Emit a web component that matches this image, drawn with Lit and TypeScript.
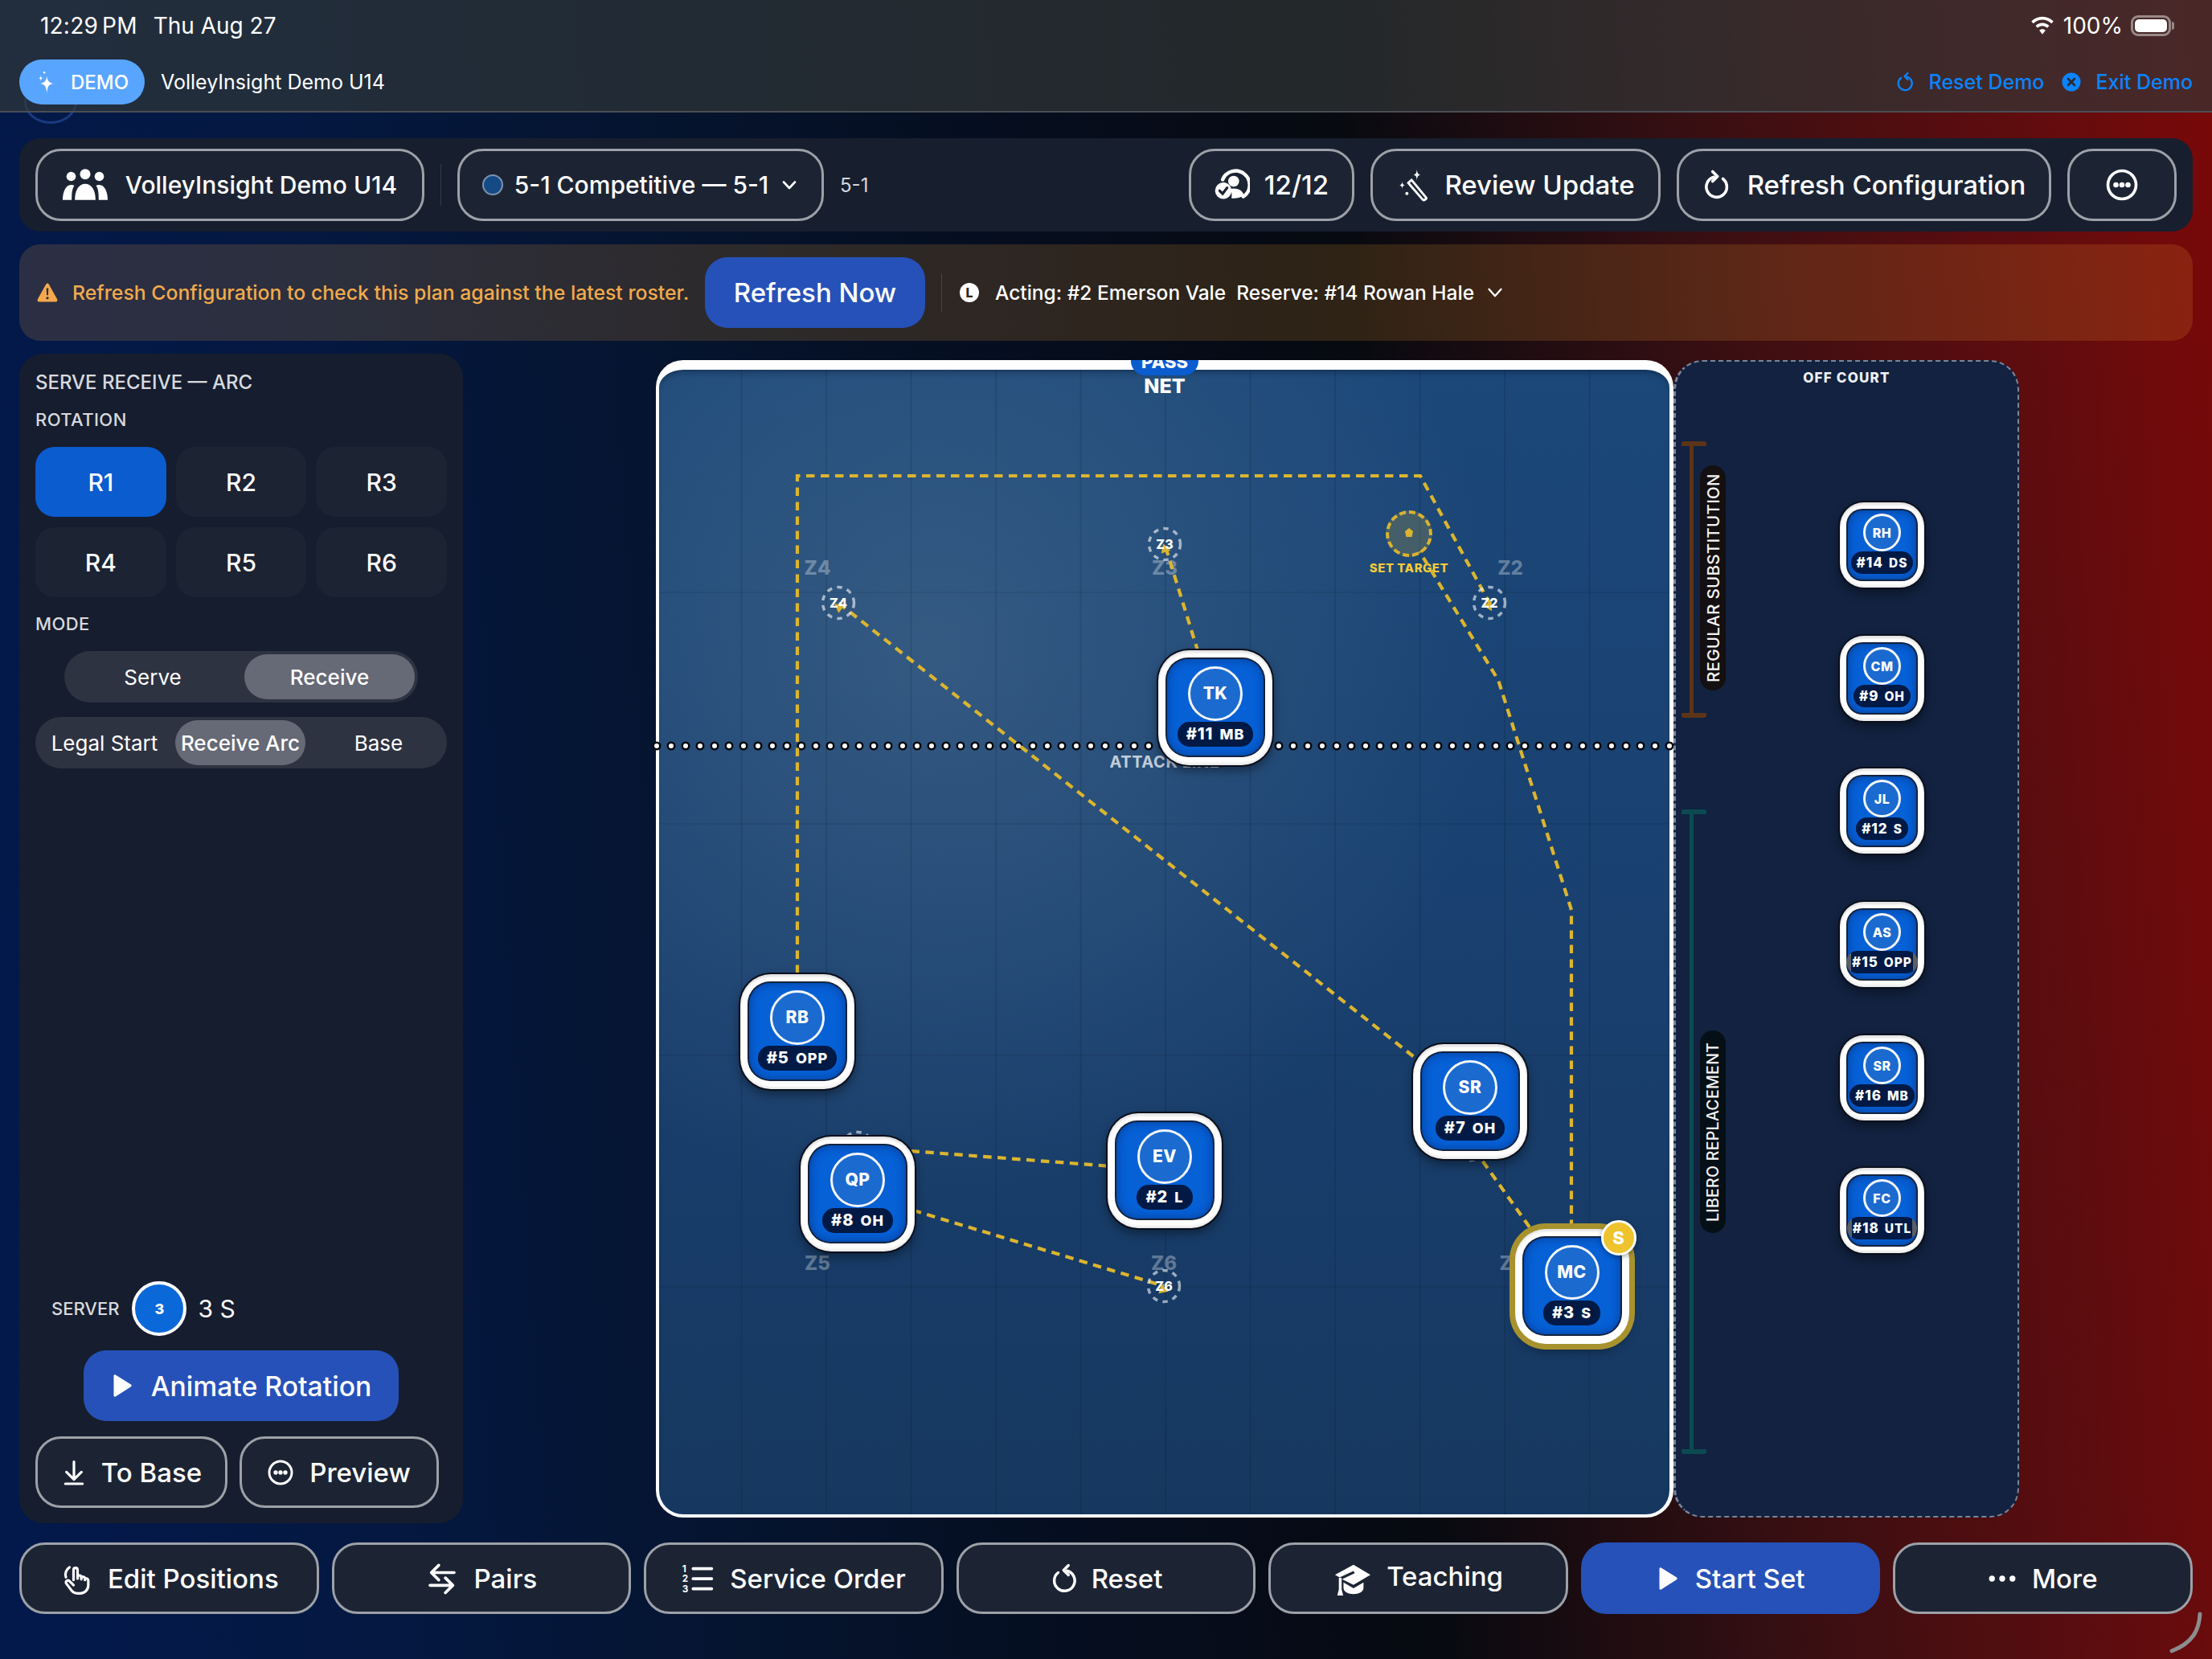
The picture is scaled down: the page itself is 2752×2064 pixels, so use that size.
import { LitElement, html, css, svg } from "lit";
import { customElement } from "lit/decorators.js";

const stroke = (w: number, inner: unknown, cls = "ic") => html`<svg class=${cls} viewBox="0 0 24 24" fill="none" stroke="currentColor" stroke-width=${w} stroke-linecap="round" stroke-linejoin="round">${inner}</svg>`;
const fill = (inner: unknown, cls = "ic") => html`<svg class=${cls} viewBox="0 0 24 24" fill="currentColor">${inner}</svg>`;

const I = {
  sparkle: fill(svg`<path d="M13 6c.6 5 2 6.600 6.500 7.500C15 14.400 13.600 16 13 23c-.6-7-2-8.600-6.500-9.500C11 12.600 12.400 11 13 6z"/><path d="M7 5.500c.2 1.800.7 2.300 2 2.700-1.300.4-1.800.9-2 2.800-.2-1.900-.7-2.400-2-2.800 1.300-.4 1.800-.9 2-2.700z"/><circle cx="10.500" cy="2.500" r="1"/>`),
  team: html`<svg class="ic" viewBox="0 4 24 17" fill="currentColor"><circle cx="12" cy="6.800" r="2.800"/><circle cx="4.500" cy="8" r="2.500"/><circle cx="19.500" cy="8" r="2.500"/><path d="M6.500 20.500c0-5 2-8.500 5.500-8.500s5.500 3.500 5.500 8.500z"/><path d="M0 20.500c0-4 1.500-8 4.500-8 .7 0 1.200.1 1.700.4C5 14.500 4.800 17 4.800 20.500z"/><path d="M24 20.500c0-4-1.500-8-4.500-8-.7 0-1.200.1-1.700.4 1.200 1.600 1.400 4.100 1.400 7.600z"/></svg>`,
  chev: stroke(2.600, svg`<path d="M5 8.500l7 7.500 7-7.500"/>`),
  personCheck: html`<svg class="ic" viewBox="0 0 24 24" fill="none" stroke="currentColor" stroke-width="2.400" stroke-linecap="round"><path d="M5.500 8.500a9.500 9.500 0 1 1 14 11.500"/><circle cx="13" cy="9.500" r="3.700" fill="currentColor" stroke="none"/><path d="M20 19c-1-3-3.500-4.500-7-4.500-1 0-1.800.1-2.500.4 1.200 1.500 1.500 3.500 1 6.100 1.300.4 5.500.4 8.500-2z" fill="currentColor" stroke="none"/><circle cx="6" cy="16" r="5.600" fill="currentColor" stroke="none"/><path d="M3.500 16l2 2 3-4" stroke="#1c2434" stroke-width="1.800"/></svg>`,
  wand: html`<svg class="ic" viewBox="0 0 24 24" fill="none" stroke="currentColor" stroke-width="1.700" stroke-linecap="round" stroke-linejoin="round"><path d="M9 10.500l2.500-2.200 11 13.400c.4.6-1.800 2.200-2.400 1.600z"/><path fill="currentColor" stroke="none" d="M15.500 .5c.3 3 .8 3.500 2.500 4-1.700.5-2.200 1-2.500 4-.3-3-.8-3.500-2.500-4 1.700-.5 2.200-1 2.500-4zM4.500 9.500c.2 2 .6 2.400 2 2.800-1.400.4-1.800.8-2 2.700-.2-1.900-.6-2.300-2-2.700 1.400-.4 1.800-.8 2-2.800z"/><circle cx="8" cy="18.500" r="1.200" fill="currentColor" stroke="none"/></svg>`,
  refresh: stroke(2.400, svg`<path d="M9.500 5.500A8.500 8.500 0 1 0 17 7"/><path d="M9 1.500l4 4-4 4" transform="translate(-.5 -.5)"/>`),
  dots: stroke(2.200, svg`<circle cx="12" cy="12" r="10.500"/><circle cx="7.500" cy="12" r=".9" fill="currentColor"/><circle cx="12" cy="12" r=".9" fill="currentColor"/><circle cx="16.500" cy="12" r=".9" fill="currentColor"/>`),
  warn: html`<svg class="ic" viewBox="0 0 24 24"><path fill="#f5a94c" d="M10.300 2.500c.8-1.400 2.600-1.400 3.400 0l9.500 17c.8 1.400-.1 3-1.700 3H2.500c-1.600 0-2.500-1.600-1.700-3z"/><path fill="#2e3040" d="M10.800 7h2.400l-.3 8h-1.800z"/><circle cx="12" cy="18.300" r="1.500" fill="#2e3040"/></svg>`,
  wifi: fill(svg`<path d="M12 3C7.800 3 4 4.700 1 7.600l2 2.200C5.500 7.400 8.600 6 12 6s6.500 1.400 9 3.800l2-2.200C20 4.700 16.200 3 12 3z"/><path d="M12 9.200c-2.600 0-5 1-6.800 2.800l2 2.200c1.300-1.200 3-2 4.800-2s3.500.8 4.800 2l2-2.200c-1.800-1.800-4.200-2.800-6.800-2.800z"/><path d="M12 15.300c-1.200 0-2.300.5-3.100 1.300L12 20.500l3.100-3.900c-.8-.8-1.900-1.300-3.100-1.300z"/>`),
  undo: stroke(2.300, svg`<path d="M14.500 5.500A8.500 8.500 0 1 1 7 7"/><path d="M15 1.500l-4 4 4 4" transform="translate(.5 -.5)"/>`),
  xc: html`<svg class="ic" viewBox="0 0 24 24"><circle cx="12" cy="12" r="11.500" fill="#0a84ff"/><path d="M8 8l8 8M16 8l-8 8" stroke="#2a2a2e" stroke-width="2.600" stroke-linecap="round"/></svg>`,
  down: stroke(2.400, svg`<path d="M12 2v16M5 11.500l7 7 7-7M4 22.500h16"/>`),
  hand: stroke(1.900, svg`<path d="M10.500 13V5.500a1.500 1.500 0 0 1 3 0V12"/><path d="M13.500 11a1.400 1.400 0 0 1 2.800 0v1.500"/><path d="M16.300 11.500a1.400 1.400 0 0 1 2.700.5v1"/><path d="M19 12.500a1.400 1.400 0 0 1 2.500.9V17a6 6 0 0 1-6 6h-2a6 6 0 0 1-5-2.800L5 15.500a1.500 1.500 0 0 1 2.500-1.600l3 3"/><path d="M7.500 3.500A6.500 6.500 0 0 0 4.800 11"/>`),
  swap: stroke(2.200, svg`<path d="M21 7.500H4M9.500 2L4 7.500 9.500 13"/><path d="M3 17h17M14.500 11.500L20 17l-5.500 5.500"/>`),
  list: html`<svg class="ic" viewBox="0 0 24 24" fill="currentColor"><rect x="7.500" y="3.500" width="16" height="2.200" rx="1"/><rect x="7.500" y="11" width="16" height="2.200" rx="1"/><rect x="7.500" y="18.500" width="16" height="2.200" rx="1"/><text x="0.500" y="7" font-size="7" font-family="Inter" font-weight="700">1</text><text x="0.500" y="14.500" font-size="7" font-family="Inter" font-weight="700">2</text><text x="0.500" y="22" font-size="7" font-family="Inter" font-weight="700">3</text></svg>`,
  play: fill(svg`<path d="M3 1.500c0-1 1-1.500 1.900-1l16.500 10.300c.8.500.8 1.800 0 2.300L4.900 23.500c-.9.500-1.900 0-1.900-1z"/>`),
};

interface T { i: string; n: string; r: string; x: number; y: number; setter?: boolean }
const court: T[] = [
  { i: "TK", n: "#11", r: "MB", x: 1512, y: 880 },
  { i: "RB", n: "#5", r: "OPP", x: 992, y: 1283 },
  { i: "QP", n: "#8", r: "OH", x: 1067, y: 1485 },
  { i: "EV", n: "#2", r: "L", x: 1449, y: 1456 },
  { i: "SR", n: "#7", r: "OH", x: 1829, y: 1370 },
  { i: "MC", n: "#3", r: "S", x: 1955.500, y: 1600, setter: true },
];
const bench = [
  ["RH", "#14", "DS", 678, false],
  ["CM", "#9", "OH", 844, false],
  ["JL", "#12", "S", 1009, false],
  ["AS", "#15", "OPP", 1175, true],
  ["SR", "#16", "MB", 1341, false],
  ["FC", "#18", "UTL", 1506, true],
] as const;
const zones = [
  ["Z4", 1043, 750, 1017, 707],
  ["Z3", 1449, 677, 1449, 707],
  ["Z2", 1853, 750, 1879, 707],
  ["Z5", 1067, 1428, 1017, 1572],
  ["Z6", 1448, 1600, 1448, 1572],
  ["Z1", 1830, 1424, 1879, 1572],
] as const;
const paths = [
  "M992 1283V592H1767L1853 750",
  "M1512 880L1449 677",
  "M1829 1370L1043 750",
  "M1449 1456L1067 1427",
  "M1067 1485L1448 1600",
  "M1955 1600L1830 1424",
  "M1955 1600V1132L1864 846L1766 686",
];
const tips = [
  [1853, 750, 61],
  [1449, 677, -107],
  [1043, 750, 218],
  [1448, 1600, 17],
];

@customElement("app-root")
export class AppRoot extends LitElement {
  static styles = css`
    :host { display: block; font-family: Inter, "Liberation Sans", sans-serif; color: #fff; }
    * { box-sizing: border-box; }
    .page { position: relative; width: 2752px; height: 2064px; overflow: hidden; display: flex; flex-direction: column;
      background: linear-gradient(86deg, #03194c 0%, #041840 18%, #05142f 32%, #060a14 58%, #070a10 62%, #3a0f12 78%, #640c0e 93%, #7a0808 100%); }
    .ic { display: block; width: 36px; height: 36px; flex: none; }
    .arc { position: absolute; left: 30px; top: 100px; width: 66px; height: 54px; border: 3px solid #1a3b80; border-radius: 50%; }

    header { position: relative; height: 140px; flex: none; background: rgba(50,56,56,.66); border-bottom: 2px solid #4a4e54; padding: 0 24px; display: flex; flex-direction: column; }
    .status { height: 64px; display: flex; align-items: center; font-size: 28px; padding-left: 26px; padding-right: 30px; }
    .status .time { letter-spacing: .2px; word-spacing: -3px; margin-right: 20px; }
    .status .rt { margin-left: auto; display: flex; align-items: center; gap: 10px; }
    .status .ic { width: 32px; height: 30px; }
    .batt { position: relative; width: 50px; height: 26px; border: 3px solid rgba(255,255,255,.45); border-radius: 9px; padding: 2px; margin-right: -3px; }
    .batt i { display: block; height: 100%; background: #fff; border-radius: 5px; }
    .batt::after { content: ""; position: absolute; right: -7px; top: 5px; width: 3px; height: 10px; border-radius: 0 3px 3px 0; background: rgba(255,255,255,.45); }
    .demo { display: flex; align-items: center; height: 56px; margin-top: 10px; font-size: 25px; }
    .pill { width: 156px; height: 56px; border-radius: 28px; background: #58a5ff; display: flex; align-items: center; gap: 16px; padding-left: 18px; font-weight: 500; margin-right: 20px; font-size: 24px; }
    .pill .ic { width: 30px; height: 32px; }
    .lnk { margin-left: auto; display: flex; align-items: center; color: #0a84ff; font-weight: 500; font-size: 25px; }
    .lnk .ic { width: 24px; height: 26px; }
    .lnk .t1 { margin: 0 22px 0 18px; }
    .lnk .t2 { margin-left: 18px; }

    .toolbar { flex: none; height: 116px; margin: 32px 24px 0; background: #171e2e; border-radius: 26px; display: flex; align-items: center; padding: 0 20px; }
    .btn { height: 90px; border: 3px solid #9da1a8; border-radius: 32px; background: #1c2434; display: flex; align-items: center; justify-content: center; font-size: 33px; font-weight: 500; color: #fff; gap: 20px; flex: none; white-space: nowrap; }
    .vdiv { width: 1px; height: 52px; background: #343a48; margin: 0 20px; flex: none; }
    .team { width: 484px; font-size: 30px; gap: 22px; } .team .ic { width: 56px; height: 40px; }
    .cfg { width: 456px; gap: 12px; font-size: 30px; }
    .cfg .dot { width: 26px; height: 26px; border-radius: 50%; background: #164a86; border: 2px solid #7d93b0; margin-right: 2px; }
    .cfg .ic { width: 24px; height: 24px; margin-left: 2px; }
    .tag { font-size: 24px; color: #d4d6da; margin-left: 20px; }
    .rgt { margin-left: auto; display: flex; gap: 20px; }
    .b-count { width: 206px; gap: 18px; } .b-count .ic { width: 44px; height: 44px; }
    .b-review { width: 361px; } .b-review .ic { width: 40px; height: 42px; }
    .b-refresh { width: 466px; } .b-refresh .ic { width: 36px; height: 38px; }
    .b-more { width: 136px; } .b-more .ic { width: 40px; height: 40px; }

    .banner { flex: none; height: 120px; margin: 16px 24px 0; border-radius: 26px; background: rgba(255,170,50,.16); display: flex; align-items: center; padding-left: 21px; font-size: 24.500px; }
    .banner > .ic { width: 28px; height: 26px; }
    .warn { color: #f2aa4c; font-weight: 500; margin-left: 17px; width: 768px; white-space: nowrap; font-size: 24.800px; }
    .now { width: 274px; height: 88px; border-radius: 28px; background: #2651b8; display: flex; align-items: center; justify-content: center; font-size: 33px; font-weight: 500; margin-left: 19px; flex: none; }
    .bdiv { width: 1px; height: 48px; background: rgba(255,255,255,.14); margin: 0 20px; }
    .lc { width: 24px; height: 24px; border-radius: 50%; background: #fff; color: #2f2418; font-size: 16px; font-weight: 800; display: flex; align-items: center; justify-content: center; margin-right: 20px; margin-left: 2px; }
    .act { font-weight: 500; white-space: nowrap; font-size: 24.500px; }
    .act + .act { margin-left: 13px; }
    .banner .cv { width: 20px; height: 20px; margin-left: 16px; }

    .main { flex: none; height: 1455px; margin: 16px 24px 0; display: flex; align-items: flex-start; }
    aside { width: 552px; height: 1455px; background: #161d2e; border-radius: 30px; padding: 0 20px; display: flex; flex-direction: column; flex: none; }
    .h1 { font-size: 24px; font-weight: 500; color: #d8dade; margin-top: 21px; height: 30px; line-height: 30px; }
    .h2 { font-size: 22px; font-weight: 500; color: #d8dade; height: 28px; line-height: 28px; letter-spacing: .4px; }
    .h2.rt { margin-top: 17px; } .h2.md { margin-top: 19px; }
    .rots { display: grid; grid-template-columns: repeat(3, 1fr); gap: 13px 12px; margin-top: 20px; }
    .rot { height: 87px; border-radius: 24px; background: #1c2333; display: flex; align-items: center; justify-content: center; font-size: 30px; font-weight: 500; }
    .rot.on { background: #0a5ccf; }
    .seg { height: 64px; border-radius: 32px; background: #2e3342; padding: 4px; display: flex; font-size: 26px; }
    .seg > div { border-radius: 28px; display: flex; align-items: center; justify-content: center; white-space: nowrap; flex: none; }
    .seg .on { background: #666976; font-weight: 500; }
    .s1 { width: 440px; margin: 20px 0 0 36px; }
    .s1 > div:first-child { width: 212px; margin-right: 8px; } .s1 .on { width: 212px; }
    .s2 { width: 512px; margin-top: 18px; }
    .s2 > div:first-child { width: 164px; margin-right: 6px; } .s2 .on { width: 162px; } .s2 > div:last-child { width: 172px; padding-left: 10px; }
    .server { margin-top: auto; display: flex; align-items: center; padding-left: 20px; font-size: 22px; color: #d8dade; font-weight: 500; }
    .server .c { width: 68px; height: 68px; border-radius: 50%; background: #0a68d8; border: 4px solid #fff; margin: 0 14px 0 16px; display: flex; align-items: center; justify-content: center; font-weight: 800; font-size: 18px; color: #fff; }
    .server .v { font-size: 30px; color: #fff; font-weight: 400; }
    .anim { width: 392px; height: 88px; margin: 18px 0 0 60px; background: #2651b8; border-radius: 28px; display: flex; align-items: center; justify-content: center; gap: 22px; font-size: 33.700px; font-weight: 500; flex: none; }
    .anim .ic { width: 28px; height: 30px; }
    .two { display: flex; gap: 15px; margin: 19px 0 19px; }
    .two .btn { height: 89px; font-size: 33px; gap: 18px; }
    .b1 { width: 239px; } .two .b2 { width: 248px; gap: 20px; }
    .two .ic { width: 32px; height: 36px; }

    .stage { position: relative; width: 1696px; height: 1440px; margin: 8px 0 0 240px; flex: none; display: flex; }
    .court { position: relative; width: 1266px; height: 1440px; flex: none; border-style: solid; border-color: #fff; border-width: 12px 5px 4px 4px; border-radius: 34px;
      background-color: #173a62;
      background-image:
        linear-gradient(90deg, rgba(0,0,0,.11) 2px, transparent 2px),
        linear-gradient(180deg, rgba(0,0,0,.07) 2px, transparent 2px),
        radial-gradient(circle 700px at 340px 350px, rgba(70,105,140,.6), rgba(70,105,140,0)),
        linear-gradient(180deg, #1b4879 0%, #193f6e 55%, #163860 100%);
      background-size: 105.500px 100%, 100% 288px, 100% 100%, 100% 100%;
      background-position: -4px 0, 0 -12px, 0 0, 0 0;
      box-shadow: inset 0 8px 10px -6px rgba(0,10,30,.45); }
    .ov { position: absolute; left: 0; top: 0; width: 2752px; height: 2064px; margin: 0; pointer-events: none; }
    .layer { position: absolute; width: 2752px; height: 2064px; }
    .lc-court { left: -820px; top: -460px; }
    .lc-off { left: -2085px; top: -450px; }
    .layer > * { position: absolute; }
    .tag-pass { left: 1407px; top: 448px; width: 84px; height: 19px; background: #0a5ccf; border-radius: 0 0 18px 18px; font-size: 22px; font-weight: 800; line-height: 5px; text-align: center; overflow: hidden; }
    .net { left: 1349px; width: 200px; top: 465px; text-align: center; font-size: 25px; font-weight: 800; line-height: 30px; }
    .al { left: 1349px; width: 200px; top: 936px; text-align: center; font-size: 20px; font-weight: 700; line-height: 24px; color: rgba(255,255,255,.72); letter-spacing: .6px; white-space: nowrap; }
    .zl { width: 80px; text-align: center; font-size: 24px; font-weight: 800; line-height: 28px; color: rgba(255,255,255,.33); }
    .zm { width: 42px; height: 42px; display: flex; align-items: center; justify-content: center; font-size: 16px; font-weight: 800; }
    .tgt { left: 1724px; top: 635px; width: 58px; height: 58px; border-radius: 50%; border: 4px dashed #d9b32f; background: rgba(226,185,47,.2); }
    .tl { left: 1653px; width: 200px; top: 697px; text-align: center; font-size: 15px; font-weight: 800; color: #f4cb3a; letter-spacing: .5px; line-height: 20px; }

    .tok { position: absolute; background: #fff; box-shadow: 0 0 0 2px #0a0f1c, 0 6px 14px rgba(0,0,0,.45), inset 0 3px 3px rgba(0,0,0,.12), inset 0 -3px 3px rgba(0,0,0,.08); display: flex; }
    .tok .in { flex: 1; background: #0660d6; display: flex; flex-direction: column; align-items: center; min-width: 0;
      box-shadow: 0 0 0 2px #14233f, inset 0 0 12px rgba(0,20,70,.45); }
    .tok .av { border-radius: 50%; background: #1b6acf; border: 3px solid #f3f6fa; display: flex; align-items: center; justify-content: center; font-weight: 800; flex: none; }
    .tok .ch { background: #011a45; display: flex; align-items: center; justify-content: center; font-weight: 800; white-space: nowrap; flex: none; }
    .big { width: 142px; height: 143px; border-radius: 38px; padding: 11px 11px 12px; }
    .big .in { border-radius: 26px; padding-top: 9px; }
    .big .av { width: 68px; height: 68px; font-size: 21px; letter-spacing: .5px; }
    .big .ch { height: 31px; border-radius: 15px; margin-top: 1px; padding: 0 11px; font-size: 20px; letter-spacing: 1px; gap: 8px; }
    .big .ch small { font-size: 18px; }
    .gold { box-shadow: 0 0 0 7px #a8922e, 0 8px 14px rgba(0,0,0,.4), inset 0 3px 3px rgba(0,0,0,.1); }
    .badge { position: absolute; left: 107px; top: -11px; width: 44px; height: 44px; border-radius: 50%; background: #eec32e; border: 3px solid #fff; font-size: 22px; font-weight: 800; display: flex; align-items: center; justify-content: center; box-shadow: 0 2px 6px rgba(0,0,0,.35); }
    .sm { left: 2289px; width: 105px; height: 106px; border-radius: 30px; padding: 10px; }
    .sm .in { border-radius: 18px; padding-top: 4px; }
    .sm .av { width: 47px; height: 47px; font-size: 16px; letter-spacing: .5px; }
    .sm .ch { height: 28px; border-radius: 14px; padding: 0 7px; font-size: 17px; letter-spacing: 1px; gap: 7px; }
    .sm .ch small { font-size: 15.500px; }
    .sm .ch.wide { background: linear-gradient(90deg, #5a5f68 6px, #011a45 6px, #011a45 calc(100% - 6px), #5a5f68 calc(100% - 6px)); }

    .off { position: relative; width: 430px; height: 1440px; flex: none; background: #122240; border: 2px dashed rgba(255,255,255,.45); border-left-width: 3px; border-radius: 36px; }
    .off .ttl { position: absolute; left: 0; width: 100%; top: 10px; text-align: center; font-size: 17px; font-weight: 800; letter-spacing: 1.200px; color: #eef0f3; line-height: 20px; }
    .brk { position: absolute; left: 7px; width: 31px; border-top: 6px solid; border-bottom: 6px solid; border-radius: 3px; }
    .brk::before { content: ""; position: absolute; left: 10px; top: 0; bottom: 0; width: 5px; background: currentColor; }
    .r { color: #5c3418; top: 99px; height: 344px; }
    .l { color: #0c4a52; top: 557px; height: 802px; }
    .blab { position: absolute; left: 30px; width: 32px; border-radius: 16px; display: flex; align-items: center; justify-content: center; writing-mode: vertical-rl; transform: rotate(180deg); font-weight: 500; white-space: nowrap; color: #f3f3f3; letter-spacing: .3px; }
    .bl1 { top: 129px; height: 280px; background: #140f10; font-size: 20.500px; }
    .bl2 { top: 832px; height: 252px; background: #050f16; font-size: 19.500px; }

    .bottom { flex: none; height: 89px; margin: 24px 24px 0; display: flex; gap: 16px; }
    .bottom .btn { flex: 1 1 0; height: 89px; font-size: 33px; gap: 20px; }
    .bottom .ic { width: 40px; height: 40px; }
    .bottom .btn.pri { background: #2651b8; border-color: #2651b8; }
    .bottom .pri .ic { width: 28px; height: 30px; }
    .bottom .sh { position: relative; top: -3px; }
    .bottom .cp { width: 46px; height: 46px; }
    .bottom .mr { width: 34px; height: 20px; }
    .bottom .rs { gap: 16px; }
    .bottom .rs .ic { width: 36px; height: 40px; }
    .hook { position: absolute; left: 2690px; top: 2004px; width: 56px; height: 54px; }
  `;

  token(t: T) {
    const w = 142, h = 143;
    const style = `left:${t.x - w / 2}px;top:${t.y - h / 2}px`;
    return html`<div class="tok big ${t.setter ? "gold" : ""}" style=${style}>
      <div class="in"><div class="av">${t.i}</div><div class="ch"><span>${t.n}</span><small>${t.r}</small></div></div>
      ${t.setter ? html`<div class="badge">S</div>` : ""}
    </div>`;
  }

  render() {
    return html`<div class="page">
      <div class="arc"></div>
      <header>
        <div class="status">
          <span class="time">12:29 PM</span><span>Thu Aug 27</span>
          <div class="rt">${I.wifi}<span>100%</span><div class="batt"><i></i></div></div>
        </div>
        <div class="demo">
          <div class="pill">${I.sparkle}<span>DEMO</span></div>
          <span>VolleyInsight Demo U14</span>
          <div class="lnk">${I.undo}<span class="t1">Reset Demo</span>${I.xc}<span class="t2">Exit Demo</span></div>
        </div>
      </header>

      <div class="toolbar">
        <div class="btn team">${I.team}<span>VolleyInsight Demo U14</span></div>
        <div class="vdiv"></div>
        <div class="btn cfg"><span class="dot"></span><span>5-1 Competitive — 5-1</span>${I.chev}</div>
        <span class="tag">5-1</span>
        <div class="rgt">
          <div class="btn b-count">${I.personCheck}<span>12/12</span></div>
          <div class="btn b-review">${I.wand}<span>Review Update</span></div>
          <div class="btn b-refresh">${I.refresh}<span>Refresh Configuration</span></div>
          <div class="btn b-more">${I.dots}</div>
        </div>
      </div>

      <div class="banner">
        ${I.warn}
        <span class="warn">Refresh Configuration to check this plan against the latest roster.</span>
        <div class="now">Refresh Now</div>
        <div class="bdiv"></div>
        <div class="lc">L</div>
        <span class="act">Acting: #2 Emerson Vale</span>
        <span class="act">Reserve: #14 Rowan Hale</span>
        <svg class="ic cv" viewBox="0 0 24 24" fill="none" stroke="currentColor" stroke-width="2.800" stroke-linecap="round" stroke-linejoin="round"><path d="M3 7l9 10 9-10"/></svg>
      </div>

      <div class="main">
        <aside>
          <div class="h1">SERVE RECEIVE — ARC</div>
          <div class="h2 rt">ROTATION</div>
          <div class="rots">
            ${["R1", "R2", "R3", "R4", "R5", "R6"].map((r, i) => html`<div class="rot ${i === 0 ? "on" : ""}">${r}</div>`)}
          </div>
          <div class="h2 md">MODE</div>
          <div class="seg s1"><div>Serve</div><div class="on">Receive</div></div>
          <div class="seg s2"><div>Legal Start</div><div class="on">Receive Arc</div><div>Base</div></div>
          <div class="server"><span>SERVER</span><div class="c">3</div><span class="v">3 S</span></div>
          <div class="anim">${I.play}<span>Animate Rotation</span></div>
          <div class="two">
            <div class="btn b1">${I.down}<span>To Base</span></div>
            <div class="btn b2">${I.dots}<span>Preview</span></div>
          </div>
        </aside>

        <div class="stage">
          <div class="court">
            <div class="layer lc-court">
              ${zones.map(z => html`<div class="zl" style="left:${z[3] - 40}px;top:${z[4] - 14}px">${z[0]}</div>`)}
              <div class="tgt"></div>
              <div class="tl">SET TARGET</div>
              <div class="al">ATTACK LINE</div>
              <svg class="ov" viewBox="0 0 2752 2064" fill="none">
                <line x1="817" y1="928" x2="2082" y2="928" stroke="#05070d" stroke-width="11" stroke-linecap="round" stroke-dasharray="0 18"/>
                <line x1="817" y1="928" x2="2082" y2="928" stroke="#fff" stroke-width="6" stroke-linecap="round" stroke-dasharray="0 18"/>
                ${paths.map(d => svg`<path d=${d} stroke="#dcb52f" stroke-width="4.200" stroke-dasharray="10.500 7.500"/>`)}
                ${tips.map(t => svg`<path d="M6 0L-5 -6V6z" fill="#dcb52f" transform="translate(${t[0]} ${t[1] + 5}) rotate(${t[2]})"/>`)}
                <path d="M1753 657l5 4-1.500 7h-7l-1.500-7z" fill="#dcb52f"/>
                ${zones.map(z => svg`<circle cx=${z[1]} cy=${z[2]} r="19.500" stroke="rgba(255,255,255,.58)" stroke-width="3.500" stroke-dasharray="6.500 6.300"/>`)}
              </svg>
              ${zones.map(z => html`<div class="zm" style="left:${z[1] - 21}px;top:${z[2] - 21}px">${z[0]}</div>`)}
              <div class="tag-pass">PASS</div>
              <div class="net">NET</div>
              ${court.map(t => this.token(t))}
            </div>
          </div>
          <div class="off">
            <div class="ttl">OFF COURT</div>
            <div class="brk r"></div>
            <div class="blab bl1">REGULAR SUBSTITUTION</div>
            <div class="brk l"></div>
            <div class="blab bl2">LIBERO REPLACEMENT</div>
            <div class="layer lc-off">
              ${bench.map(b => html`<div class="tok sm" style="top:${b[3] - 53}px">
                <div class="in"><div class="av">${b[0]}</div><div class="ch ${b[4] ? "wide" : ""}"><span>${b[1]}</span><small>${b[2]}</small></div></div>
              </div>`)}
            </div>
          </div>
        </div>
      </div>

      <div class="bottom">
        <div class="btn">${I.hand}<span>Edit Positions</span></div>
        <div class="btn">${I.swap}<span>Pairs</span></div>
        <div class="btn">${I.list}<span>Service Order</span></div>
        <div class="btn rs">${I.undo}<span>Reset</span></div>
        <div class="btn"><svg class="ic cp" viewBox="0 0 24 24" fill="currentColor"><path d="M13 3L1 9.500l3 1.700 9-4.200.8 1.500-8.200 3.900L13 16l11-6.500z"/><path d="M6.500 14.500V18c0 2.500 3 4 6.500 4s6.500-1.500 6.500-4v-3.500L13 18.300z"/><path d="M3.500 11.500h1.800v7.500l1 4H2.500l1-4z"/></svg><span class="sh">Teaching</span></div>
        <div class="btn pri">${I.play}<span>Start Set</span></div>
        <div class="btn"><svg class="ic mr" viewBox="0 0 24 14" fill="currentColor"><circle cx="3" cy="7" r="2.600"/><circle cx="12" cy="7" r="2.600"/><circle cx="21" cy="7" r="2.600"/></svg><span>More</span></div>
      </div>

      <svg class="hook" viewBox="0 0 56 54" fill="none"><path d="M47 4C46 24 38 40 12 50" stroke="#8d8d8d" stroke-width="5" stroke-linecap="round"/></svg>
    </div>`;
  }
}
